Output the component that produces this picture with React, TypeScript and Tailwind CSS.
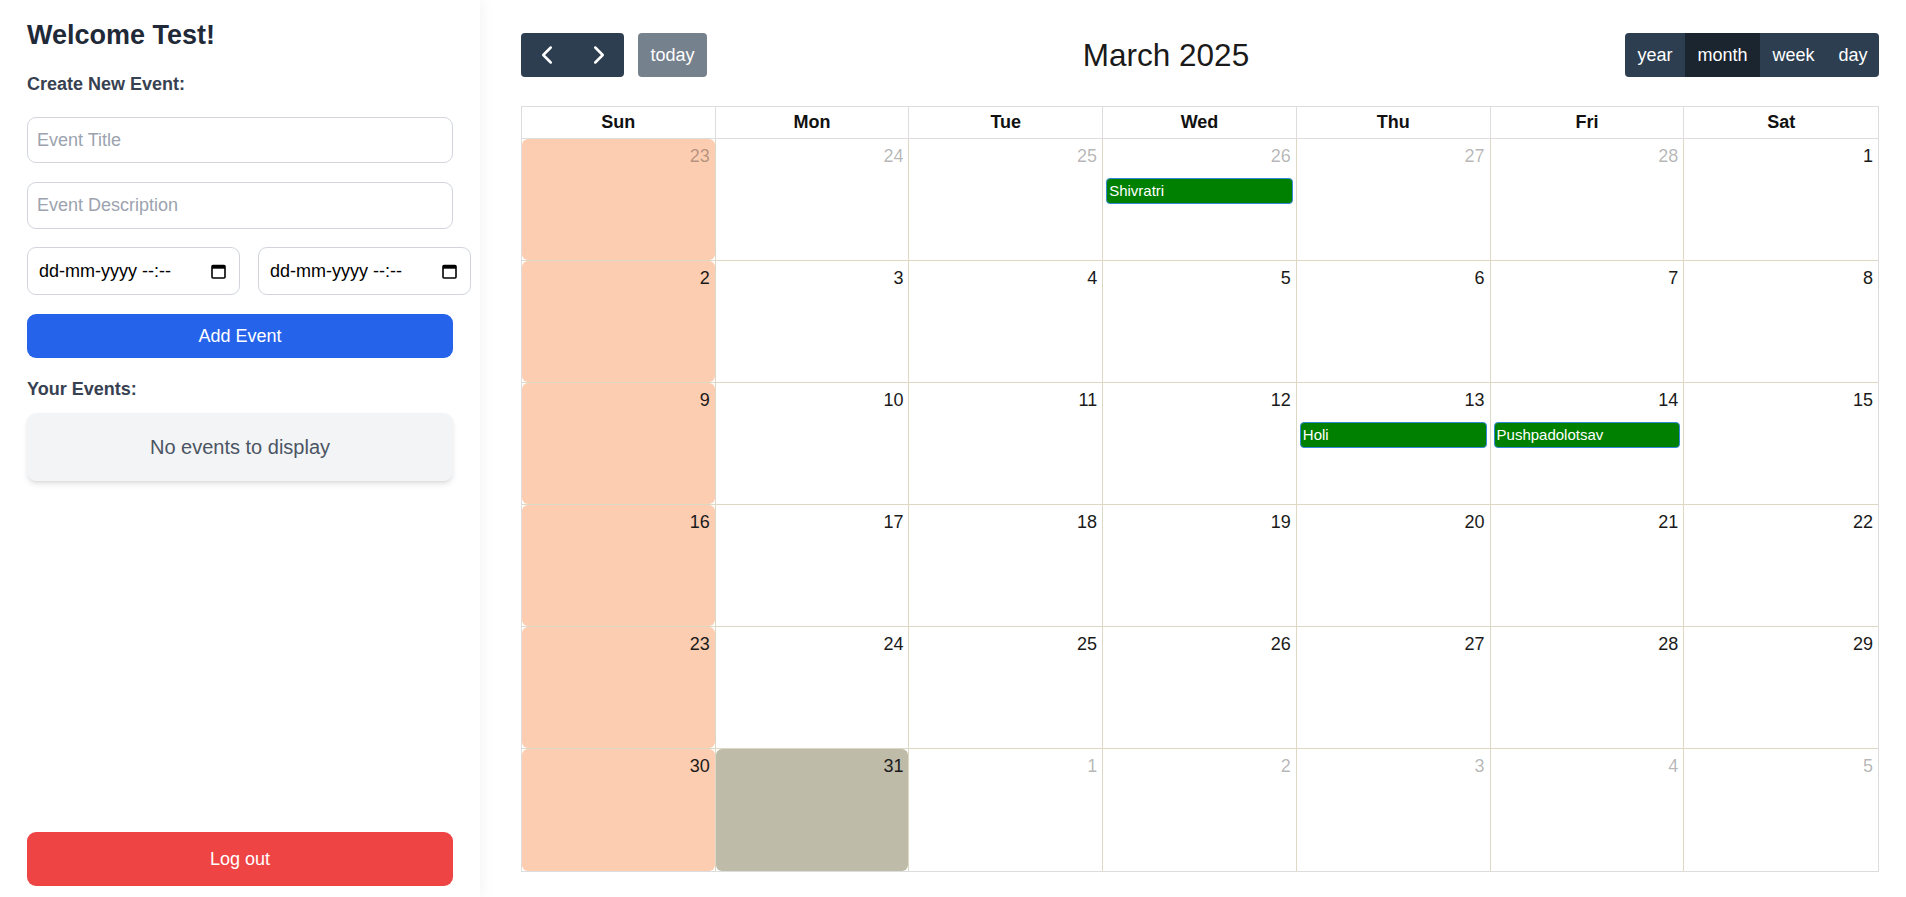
import React from "react";
import { ChevronLeft, ChevronRight } from "lucide-react";

type Cell = { d: number; other?: boolean; today?: boolean; event?: string };

const rows: Cell[][] = [
  [
    { d: 23, other: true },
    { d: 24, other: true },
    { d: 25, other: true },
    { d: 26, other: true, event: "Shivratri" },
    { d: 27, other: true },
    { d: 28, other: true },
    { d: 1 },
  ],
  [2, 3, 4, 5, 6, 7, 8].map((d) => ({ d })),
  [
    { d: 9 },
    { d: 10 },
    { d: 11 },
    { d: 12 },
    { d: 13, event: "Holi" },
    { d: 14, event: "Pushpadolotsav" },
    { d: 15 },
  ],
  [16, 17, 18, 19, 20, 21, 22].map((d) => ({ d })),
  [23, 24, 25, 26, 27, 28, 29].map((d) => ({ d })),
  [
    { d: 30 },
    { d: 31, today: true },
    { d: 1, other: true },
    { d: 2, other: true },
    { d: 3, other: true },
    { d: 4, other: true },
    { d: 5, other: true },
  ],
];

const days = ["Sun", "Mon", "Tue", "Wed", "Thu", "Fri", "Sat"];

function CalIcon() {
  return (
    <svg width="15" height="15" viewBox="0 0 15 15" className="shrink-0">
      <rect x="1" y="1.5" width="13" height="12.5" rx="1" fill="none" stroke="#000" strokeWidth="1.6" />
      <rect x="1" y="1.5" width="13" height="3.2" fill="#000" />
    </svg>
  );
}

function DateBox() {
  return (
    <div className="w-[213px] shrink-0 h-[48px] border border-[#d1d5db] rounded-[9px] flex items-center justify-between pl-[11px] pr-[13px] text-[18px] text-black">
      <span>dd-mm-yyyy --:--</span>
      <CalIcon />
    </div>
  );
}

export default function App() {
  return (
    <div
      className="flex w-full h-screen bg-white overflow-hidden"
      style={{ fontFamily: '"Liberation Sans", Arial, sans-serif' }}
    >
      {/* Sidebar */}
      <div className="relative z-10 w-[480px] shrink-0 h-screen flex flex-col pt-[17px] px-[27px] pb-[11px] bg-white shadow-[4px_0_12px_rgba(0,0,0,0.04)]">
        <h1 className="text-[27px] leading-[36px] font-bold text-[#1f2937] mb-[18px]">Welcome Test!</h1>
        <div className="text-[18px] leading-[27px] font-bold text-[#374151] mb-[19px]">Create New Event:</div>
        <input
          className="w-full h-[46px] border border-[#d1d5db] rounded-[9px] px-[9px] text-[18px] placeholder:text-[#9ca3af] outline-none mb-[19px]"
          placeholder="Event Title"
        />
        <input
          className="w-full h-[47px] border border-[#d1d5db] rounded-[9px] px-[9px] text-[18px] placeholder:text-[#9ca3af] outline-none mb-[18px]"
          placeholder="Event Description"
        />
        <div className="flex gap-[18px] mb-[19px]">
          <DateBox />
          <DateBox />
        </div>
        <button className="w-full h-[44px] rounded-[9px] bg-[#2563eb] text-white text-[18px] mb-[18px]">Add Event</button>
        <div className="text-[18px] leading-[27px] font-bold text-[#374151] mb-[10px]">Your Events:</div>
        <div className="w-full h-[68px] rounded-[9px] bg-[#f3f4f6] shadow-md flex items-center justify-center text-[20px] text-[#4b5563]">
          No events to display
        </div>
        <button className="mt-auto w-full h-[54px] rounded-[9px] bg-[#ef4444] text-white text-[18px]">Log out</button>
      </div>

      {/* Main */}
      <div className="flex-1 pl-[41px] pr-[27px] pt-[33px] text-[18px]">
        <div className="flex items-center justify-between h-[44px] mb-[29px]">
          <div className="flex">
            <div className="flex rounded-[4px] overflow-hidden">
              <button className="w-[52px] h-[44px] bg-[#2c3e50] text-white flex items-center justify-center">
                <ChevronLeft size={30} strokeWidth={2} />
              </button>
              <button className="w-[51px] h-[44px] bg-[#2c3e50] text-white flex items-center justify-center">
                <ChevronRight size={30} strokeWidth={2} />
              </button>
            </div>
            <button className="ml-[14px] w-[69px] h-[44px] rounded-[4px] bg-[#2c3e50] opacity-65 text-white text-[18px]">today</button>
          </div>
          <h2 className="text-[31.5px] leading-[47px] text-[#1a1a1a]">March 2025</h2>
          <div className="flex rounded-[4px] overflow-hidden text-white text-[18px]">
            <button className="w-[60px] h-[44px] bg-[#2c3e50]">year</button>
            <button className="w-[75px] h-[44px] bg-[#1a252f]">month</button>
            <button className="w-[67px] h-[44px] bg-[#2c3e50]">week</button>
            <button className="w-[52px] h-[44px] bg-[#2c3e50]">day</button>
          </div>
        </div>

        <div className="border border-[#ddd]">
          <div className="grid grid-cols-7 border-b border-[#ddd]">
            {days.map((d, i) => (
              <div
                key={d}
                className={`h-[31px] leading-[31px] text-center font-bold text-[#111] ${i < 6 ? "border-r border-[#ddd]" : ""}`}
              >
                {d}
              </div>
            ))}
          </div>
          <div className="grid grid-cols-7">
            {rows.map((row, ri) =>
              row.map((c, ci) => {
                const fill = ci === 0 ? "bg-[#fdcdb1] rounded-[6px]" : c.today ? "bg-[#bebba8] rounded-[6px]" : "";
                return (
                  <div
                    key={`${ri}-${ci}`}
                    className={`h-[122px] ${ci < 6 ? "border-r" : ""} ${ri < 5 ? "border-b" : ""} border-[#ddd8c4]`}
                  >
                    <div className={`w-full h-full ${fill}`}>
                      <div
                        className={`text-right pt-[4px] pr-[5px] text-[18px] leading-[27px] ${c.other ? "text-black/30" : "text-[#1a1a1a]"}`}
                      >
                        {c.d}
                      </div>
                      {c.event && (
                        <div className="mt-[8px] mx-[3px] h-[26px] rounded-[4px] bg-[#008000] border border-[#3788d8] text-white text-[15px] leading-[24px] pl-[2px] truncate">
                          {c.event}
                        </div>
                      )}
                    </div>
                  </div>
                );
              })
            )}
          </div>
        </div>
      </div>
    </div>
  );
}
